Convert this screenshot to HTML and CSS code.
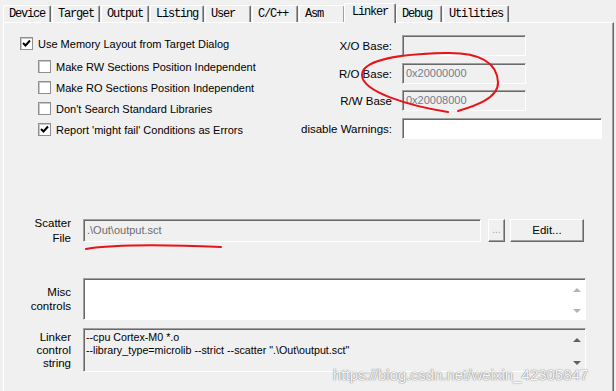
FILE: index.html
```html
<!DOCTYPE html>
<html lang="en">
<head>
    <meta charset="UTF-8">
    <title>Options for Target - Linker</title>
    <link rel="stylesheet" href="styles.css">
</head>
<body>
    <div class="tabs">
        <div class="tab">Device</div>
        <div class="tab">Target</div>
        <div class="tab">Output</div>
        <div class="tab">Listing</div>
        <div class="tab">User</div>
        <div class="tab">C/C++</div>
        <div class="tab">Asm</div>
        <div class="tab active">Linker</div>
        <div class="tab">Debug</div>
        <div class="tab">Utilities</div>
    </div>

    <div class="panel">
        <div class="top">
            <div class="opts">
                <div class="opt first"><span class="check on"><svg viewBox="0 0 9 9" width="9" height="9"><path d="M1 4 L3.5 6.5 L8 1.5" fill="none" stroke="#000" stroke-width="2"/></svg></span>Use Memory Layout from Target Dialog</div>
                <div class="opt sub"><span class="check"></span>Make RW Sections Position Independent</div>
                <div class="opt sub"><span class="check"></span>Make RO Sections Position Independent</div>
                <div class="opt sub"><span class="check"></span>Don't Search Standard Libraries</div>
                <div class="opt sub"><span class="check on"><svg viewBox="0 0 9 9" width="9" height="9"><path d="M1 4 L3.5 6.5 L8 1.5" fill="none" stroke="#000" stroke-width="2"/></svg></span>Report 'might fail' Conditions as Errors</div>
            </div>
            <div class="bases">
                <label>X/O Base:</label><div class="field ro short"></div>
                <label>R/O Base:</label><div class="field ro short">0x20000000</div>
                <label>R/W Base</label><div class="field ro short">0x20008000</div>
                <label>disable Warnings:</label><div class="field long"></div>
            </div>
        </div>

        <div class="files">
            <div class="row scatter">
                <div class="lbl">Scatter<br>File</div>
                <div class="field ro path">.\Out\output.sct</div>
                <div class="btn dots">...</div>
                <div class="btn edit">Edit...</div>
            </div>
            <div class="row misc">
                <div class="lbl">Misc<br>controls</div>
                <div class="field area">
                    <div class="text"></div>
                    <div class="scroll"><span class="up"></span><span class="down"></span></div>
                </div>
            </div>
            <div class="row linker">
                <div class="lbl">Linker<br>control<br>string</div>
                <div class="field area ro">
                    <div class="text">--cpu Cortex-M0 *.o<br>--library_type=microlib --strict --scatter ".\Out\output.sct"</div>
                    <div class="scroll"><span class="up dark"></span><span class="down dark"></span></div>
                </div>
            </div>
        </div>
    </div>

    <div class="watermark">https://blog.csdn.net/weixin_42305847</div>

    <svg class="marks" width="616" height="391" viewBox="0 0 616 391">
        <path d="M448 112 C410 106 362 92 362 75 C362 60 400 54 445 53 C485 52 497 65 498 82 C499 98 475 106 458 111" fill="none" stroke="#e8141a" stroke-width="2" stroke-linecap="round"/>
        <path d="M86 249 C110 245 150 244 221 247" fill="none" stroke="#e8141a" stroke-width="2" stroke-linecap="round"/>
    </svg>
</body>
</html>
```

FILE: styles.css
```css
body {
    margin: 0;
    width: 616px;
    height: 391px;
    overflow: hidden;
    background: #f0f0f0;
    font-family: "Liberation Sans", Arial, sans-serif;
    font-size: 11px;
    color: #000;
    position: relative;
}

.tabs {
    display: flex;
    align-items: flex-end;
    padding: 3px 0 0 3px;
}

.tab {
    box-sizing: border-box;
    height: 17px;
    min-width: 46px;
    padding: 0 5px;
    margin-right: 1px;
    border-top: 1px solid #fff;
    border-left: 1px solid #fff;
    border-right: 1px solid #696969;
    box-shadow: inset -1px 0 #a0a0a0;
    border-radius: 2px 2px 0 0;
    font-family: "Liberation Mono", "Courier New", monospace;
    font-size: 12px;
    letter-spacing: -1.2px;
    line-height: 16px;
}

.tab.active {
    position: relative;
    height: 20px;
    margin: 0 0 -1px -2px;
    padding: 0 7px;
    background: #f0f0f0;
}

.panel {
    box-sizing: border-box;
    margin-left: 3px;
    width: 611px;
    height: 369px;
    border-top: 1px solid #fff;
    border-left: 1px solid #fff;
    border-right: 1px solid #696969;
    box-shadow: inset -1px 0 #a0a0a0;
}

.top {
    display: flex;
    justify-content: space-between;
    padding: 12px 11px 0 16px;
}

.opt {
    display: flex;
    align-items: center;
    gap: 5px;
    height: 21px;
}

.opt.first {
    margin-top: -2px;
    margin-bottom: 2px;
}

.opt.sub {
    margin-left: 18px;
}

.check {
    box-sizing: border-box;
    width: 13px;
    height: 13px;
    background: #fff;
    border: 1px solid #8f8f8f;
    box-shadow: inset 1px 1px #c8c8c8;
    display: flex;
    align-items: center;
    justify-content: center;
}

.bases {
    display: grid;
    grid-template-columns: auto auto;
    column-gap: 10px;
    row-gap: 5px;
}

.bases label {
    align-self: center;
    text-align: right;
    font-size: 11.5px;
}

.field {
    box-sizing: border-box;
    height: 21px;
    background: #fff;
    border: 1px solid;
    border-color: #a0a0a0 #fff #fff #a0a0a0;
    box-shadow: inset 1px 1px #696969;
    padding: 2px 0 0 3px;
    line-height: 15px;
}

.field.ro {
    background: #f0f0f0;
    color: #6f7c8e;
}

.field.short {
    width: 124px;
}

.field.long {
    width: 200px;
}

.files {
    margin-top: 79px;
    padding-right: 27px;
}

.row {
    display: flex;
    align-items: flex-start;
}

.lbl {
    box-sizing: border-box;
    width: 67px;
    margin-right: 12px;
    text-align: right;
    line-height: 14px;
    font-size: 11.5px;
}

.scatter {
    height: 23px;
}

.scatter .lbl {
    line-height: 15px;
    margin-top: -3px;
}

.field.path {
    flex: 1;
    height: 23px;
    padding-top: 3px;
    color: #6d6d6d;
}

.btn {
    box-sizing: border-box;
    height: 23px;
    border: 1px solid;
    border-color: #fff #696969 #696969 #fff;
    box-shadow: inset -1px -1px #a0a0a0;
    text-align: center;
    line-height: 20px;
    font-size: 11.5px;
}

.btn.dots {
    width: 17px;
    margin-left: 7px;
    color: #a0a0a0;
    font-size: 10px;
}

.btn.edit {
    width: 74px;
    margin: 0 2px 0 5px;
}

.misc {
    margin-top: 36px;
}

.misc .lbl {
    padding-top: 7px;
}

.field.area {
    flex: 1;
    display: flex;
    height: 42px;
    padding: 1px 0 0 2px;
    font-size: 10.7px;
}

.linker {
    margin-top: 8px;
}

.linker .lbl {
    padding-top: 3px;
    line-height: 13px;
}

.linker .field.area {
    height: 44px;
    color: #000;
    line-height: 13px;
}

.area .text {
    flex: 1;
    padding-top: 1px;
}

.scroll {
    width: 17px;
    display: flex;
    flex-direction: column;
    align-items: center;
    justify-content: space-between;
    padding: 8px 0 6px;
}

.up, .down {
    width: 0;
    height: 0;
    border-left: 4px solid transparent;
    border-right: 4px solid transparent;
}

.up {
    border-bottom: 4px solid #b4b4b4;
}

.down {
    border-top: 4px solid #b4b4b4;
}

.up.dark {
    border-bottom-color: #606060;
}

.down.dark {
    border-top-color: #606060;
}

.watermark {
    position: absolute;
    left: 333px;
    top: 366px;
    font-size: 15px;
    color: rgba(255, 255, 255, 0.95);
    text-shadow: 0 0 1px rgba(90, 90, 90, 0.9), 0 0 2px rgba(120, 120, 120, 0.5);
}

.marks {
    position: absolute;
    left: 0;
    top: 0;
    pointer-events: none;
}
```
